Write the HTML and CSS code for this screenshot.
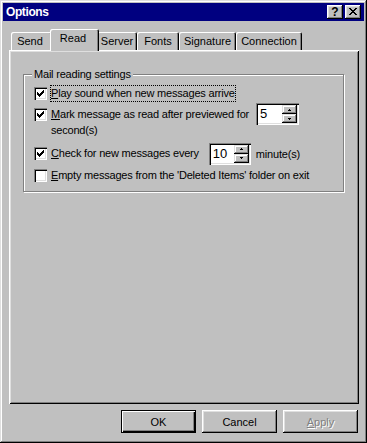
FILE: index.html
```html
<!DOCTYPE html>
<html lang="en">
<head>
	<meta charset="UTF-8">
	<title>Options</title>
	<link rel="stylesheet" href="styles.css">
</head>
<body>
	<div class="window">
		<div class="titlebar">
			<span class="title">Options</span>
			<div class="caption-btns">
				<span class="cap-btn help">?</span>
				<span class="cap-btn close">
					<svg width="8" height="7" viewBox="0 0 8 7" shape-rendering="crispEdges"><path d="M0 0h2v1h-2zM6 0h2v1h-2zM1 1h2v1h-2zM5 1h2v1h-2zM2 2h4v1h-4zM3 3h2v1h-2zM2 4h4v1h-4zM1 5h2v1h-2zM5 5h2v1h-2zM0 6h2v1h-2zM6 6h2v1h-2z" fill="#000"/></svg>
				</span>
			</div>
		</div>

		<div class="tabs">
			<div class="tab tab-send">Send</div>
			<div class="tab tab-read active">Read</div>
			<div class="tab tab-server">Server</div>
			<div class="tab tab-fonts">Fonts</div>
			<div class="tab tab-sig">Signature</div>
			<div class="tab tab-conn">Connection</div>
		</div>

		<div class="panel">
			<fieldset class="group">
				<legend>Mail reading settings</legend>

				<div class="row row1">
					<span class="check"><svg width="13" height="13" viewBox="0 0 13 13" shape-rendering="crispEdges"><path d="M3 5h1v3h-1zM4 6h1v3h-1zM5 7h1v3h-1zM6 6h1v3h-1zM7 5h1v3h-1zM8 4h1v3h-1zM9 3h1v3h-1z" fill="#000"/></svg></span>
					<span class="label focus"><u>P</u>lay sound when new messages arrive</span>
				</div>

				<div class="row row2">
					<span class="check"><svg width="13" height="13" viewBox="0 0 13 13" shape-rendering="crispEdges"><path d="M3 5h1v3h-1zM4 6h1v3h-1zM5 7h1v3h-1zM6 6h1v3h-1zM7 5h1v3h-1zM8 4h1v3h-1zM9 3h1v3h-1z" fill="#000"/></svg></span>
					<span class="label"><u>M</u>ark message as read after previewed for</span>
					<span class="spin spin-sec">
						<span class="spin-val">5</span>
						<span class="spin-btns">
							<span class="spin-btn"><svg width="3" height="2" viewBox="0 0 3 2" shape-rendering="crispEdges"><path d="M1 0h1v1h-1zM0 1h3v1h-3z" fill="#000"/></svg></span>
							<span class="spin-btn"><svg width="3" height="2" viewBox="0 0 3 2" shape-rendering="crispEdges"><path d="M0 0h3v1h-3zM1 1h1v1h-1z" fill="#000"/></svg></span>
						</span>
					</span>
				</div>
				<div class="wrap-line">second(s)</div>

				<div class="row row3">
					<span class="check"><svg width="13" height="13" viewBox="0 0 13 13" shape-rendering="crispEdges"><path d="M3 5h1v3h-1zM4 6h1v3h-1zM5 7h1v3h-1zM6 6h1v3h-1zM7 5h1v3h-1zM8 4h1v3h-1zM9 3h1v3h-1z" fill="#000"/></svg></span>
					<span class="label"><u>C</u>heck for new messages every</span>
					<span class="spin spin-min">
						<span class="spin-val">10</span>
						<span class="spin-btns">
							<span class="spin-btn"><svg width="3" height="2" viewBox="0 0 3 2" shape-rendering="crispEdges"><path d="M1 0h1v1h-1zM0 1h3v1h-3z" fill="#000"/></svg></span>
							<span class="spin-btn"><svg width="3" height="2" viewBox="0 0 3 2" shape-rendering="crispEdges"><path d="M0 0h3v1h-3zM1 1h1v1h-1z" fill="#000"/></svg></span>
						</span>
					</span>
					<span class="after">minute(s)</span>
				</div>

				<div class="row row4">
					<span class="check"></span>
					<span class="label"><u>E</u>mpty messages from the 'Deleted Items' folder on exit</span>
				</div>
			</fieldset>
		</div>

		<div class="buttons">
			<span class="btn default">OK</span>
			<span class="btn">Cancel</span>
			<span class="btn disabled"><u>A</u>pply</span>
		</div>
	</div>
</body>
</html>
```

FILE: styles.css
```css
*{margin:0;padding:0;box-sizing:border-box;}
body{background:#c0c0c0;font-family:"Liberation Sans",Arial,sans-serif;font-size:11px;letter-spacing:-0.2px;color:#000;}

.window{width:367px;height:443px;padding:3px;background:#c0c0c0;display:flex;flex-direction:column;
	box-shadow:inset -1px -1px #000,inset 1px 1px #dfdfdf,inset -2px -2px #808080,inset 2px 2px #fff;}

.titlebar{height:18px;background:#000080;display:flex;align-items:center;justify-content:space-between;padding:0 3px 0 3px;}
.title{color:#fff;font-weight:bold;font-size:12px;letter-spacing:-0.4px;}
.caption-btns{display:flex;gap:2px;}
.cap-btn{width:16px;height:14px;background:#c0c0c0;display:flex;align-items:center;justify-content:center;
	font-weight:bold;font-size:12px;line-height:14px;letter-spacing:0;
	box-shadow:inset -1px -1px #000,inset 1px 1px #fff,inset -2px -2px #808080,inset 2px 2px #dfdfdf;}
.cap-btn.help{padding-bottom:1px;}
.cap-btn svg{display:block;margin-top:-1px;}

.tabs{display:flex;align-items:flex-end;height:21px;margin:8px 0 0 8px;position:relative;z-index:1;}
.tab{height:18px;background:#c0c0c0;line-height:17px;padding-top:1px;text-align:center;border-radius:2px 2px 0 0;letter-spacing:0;
	box-shadow:inset 1px 1px #fff,inset -1px 0 #000,inset -2px 0 #808080;}
.tab.active{height:22px;margin:0 -2px -1px -2px;padding-top:0;line-height:18px;position:relative;z-index:2;}
.tab-send{width:41px;padding-right:3px;}
.tab-read{width:49px;padding-right:3px;}
.tab-server{width:40px;}
.tab-fonts{width:42px;}
.tab-sig{width:57px;}
.tab-conn{width:66px;}

.panel{height:354px;margin:0 5px 0 6px;padding:18px 15px 0 14px;
	box-shadow:inset 1px 1px #fff,inset -1px -1px #000,inset 2px 2px #dfdfdf,inset -2px -2px #808080;}

.group{border:1px solid #808080;box-shadow:inset 1px 1px #fff,1px 1px #fff;padding:1px 0 5px 10px;min-width:0;}
.group legend{margin-left:-2px;padding:0 2px;line-height:13px;background:#c0c0c0;}

.row{display:flex;align-items:center;}
.row1{height:22px;}
.row2{height:20px;}
.row3{height:23px;margin-top:6px;}
.row4{height:21px;}
.wrap-line{height:12px;line-height:12px;padding-left:17px;}

.check{width:13px;height:13px;flex:none;background:#fff;
	box-shadow:inset 1px 1px #808080,inset 2px 2px #000,inset -1px -1px #fff,inset -2px -2px #dfdfdf;}
.check svg{display:block;}

.label{margin-left:3px;padding:1px 0;line-height:13px;border:1px dotted transparent;}
.label.focus{border-color:#000;}
.label u,.btn u{text-decoration:underline;text-underline-offset:1px;}

.spin{display:flex;height:22px;background:#fff;padding:2px;
	box-shadow:inset 1px 1px #808080,inset 2px 2px #000,inset -1px -1px #fff,inset -2px -2px #dfdfdf;}
.spin-sec{width:43px;margin-left:6px;}
.spin-min{width:42px;margin-left:9px;}
.spin-val{flex:1;padding-left:2px;font-size:13px;line-height:17px;letter-spacing:0;}
.spin-btns{width:15px;display:flex;flex-direction:column;}
.spin-btn{flex:1;background:#c0c0c0;display:flex;align-items:center;justify-content:center;
	box-shadow:inset -1px -1px #000,inset 1px 1px #dfdfdf,inset -2px -2px #808080,inset 2px 2px #fff;}
.spin-btn svg{display:block;}
.after{margin-left:5px;}

.buttons{display:flex;justify-content:flex-end;gap:6px;margin-top:6px;padding-right:6px;}
.btn{width:75px;height:23px;display:flex;align-items:center;justify-content:center;background:#c0c0c0;letter-spacing:0;
	box-shadow:inset -1px -1px #000,inset 1px 1px #fff,inset -2px -2px #808080,inset 2px 2px #dfdfdf;}
.btn.default{box-shadow:inset 0 0 0 1px #000,inset 2px 2px #fff,inset -2px -2px #000,inset -3px -3px #808080;}
.btn.disabled{color:#808080;text-shadow:1px 1px #fff;}
```
